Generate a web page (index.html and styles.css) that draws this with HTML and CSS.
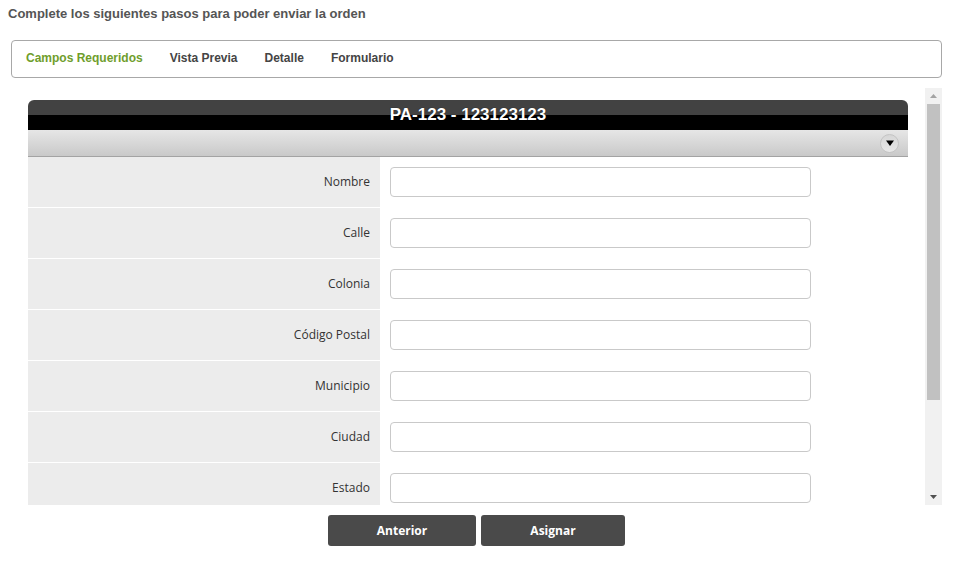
FILE: index.html
```html
<!DOCTYPE html>
<html lang="es">
<head>
<meta charset="utf-8">
<title>Orden</title>
<link rel="stylesheet" href="styles.css">
</head>
<body>
<div class="title">Complete los siguientes pasos para poder enviar la orden</div>
<nav class="tabs">
  <span class="tab active">Campos Requeridos</span>
  <span class="tab">Vista Previa</span>
  <span class="tab">Detalle</span>
  <span class="tab">Formulario</span>
</nav>
<div class="scroll">
  <div class="viewport">
    <div class="panel">
      <div class="panel-head">PA-123 - 123123123</div>
      <div class="panel-sub">
        <span class="toggle"><svg width="10" height="8" viewBox="0 0 10 8"><path d="M1 1.5 H9 L5 7 Z" fill="#000"/></svg></span>
      </div>
      <div class="row"><label class="lbl">Nombre</label><div class="fld"><input class="inp" type="text"></div></div>
      <div class="row"><label class="lbl">Calle</label><div class="fld"><input class="inp" type="text"></div></div>
      <div class="row"><label class="lbl">Colonia</label><div class="fld"><input class="inp" type="text"></div></div>
      <div class="row"><label class="lbl">Código Postal</label><div class="fld"><input class="inp" type="text"></div></div>
      <div class="row"><label class="lbl">Municipio</label><div class="fld"><input class="inp" type="text"></div></div>
      <div class="row"><label class="lbl">Ciudad</label><div class="fld"><input class="inp" type="text"></div></div>
      <div class="row"><label class="lbl">Estado</label><div class="fld"><input class="inp" type="text"></div></div>
      <div class="row"><label class="lbl">País</label><div class="fld"><input class="inp" type="text"></div></div>
      <div class="row"><label class="lbl">Teléfono</label><div class="fld"><input class="inp" type="text"></div></div>
    </div>
  </div>
  <div class="sbar" aria-hidden="true">
    <div class="sbar-btn"><svg width="7" height="4" viewBox="0 0 7 4"><path d="M0 4 L3.5 0 L7 4 Z" fill="#a3a3a3"/></svg></div>
    <div class="sbar-track"><div class="sbar-thumb"></div></div>
    <div class="sbar-btn"><svg width="7" height="4" viewBox="0 0 7 4"><path d="M0 0 L7 0 L3.5 4 Z" fill="#505050"/></svg></div>
  </div>
</div>
<div class="actions">
  <button class="btn btn-prev">Anterior</button>
  <button class="btn btn-next">Asignar</button>
</div>
</body>
</html>
```
FILE: styles.css
```css
html, body {
  margin: 0;
  padding: 0;
  background: #fff;
}
body {
  width: 953px;
  height: 563px;
  overflow: hidden;
  font-family: "Liberation Sans", Arial, sans-serif;
}
.title {
  padding: 6px 8px 0;
  font-size: 13px;
  line-height: 15px;
  font-weight: bold;
  color: #555;
}
.tabs {
  margin: 19px 11px 0 11px;
  height: 34px;
  padding: 0 0 2px 14px;
  border: 1px solid #a8a8a8;
  border-radius: 4px;
  display: flex;
  align-items: center;
}
.tab {
  font-size: 12px;
  font-weight: bold;
  color: #444;
  margin-right: 27px;
}
.tab.active {
  color: #6f9e2c;
}
.scroll {
  margin: 10px 0 0 28px;
  width: 914px;
  height: 417px;
  display: flex;
}
.viewport {
  flex: 1;
  overflow: hidden;
  padding-top: 12px;
}
.sbar {
  width: 17px;
  background: #f1f1f1;
  display: flex;
  flex-direction: column;
}
.sbar-btn {
  height: 16px;
  display: flex;
  align-items: center;
  justify-content: center;
}
.sbar-track {
  flex: 1;
  padding: 0 2px;
}
.sbar-thumb {
  height: 296px;
  background: #c1c1c1;
}
.panel {
  width: 880px;
}
.panel-head {
  height: 30px;
  border-radius: 6px 6px 0 0;
  background: linear-gradient(#424242 0, #424242 15px, #000 15px, #000 30px);
  color: #fff;
  font-weight: bold;
  font-size: 17px;
  line-height: 30px;
  text-align: center;
  text-shadow: 0 0 1px rgba(0,0,0,.8);
}
.panel-sub {
  height: 26px;
  background: linear-gradient(#e6e6e6, #c9c9c9);
  border-bottom: 1px solid #a3a3a3;
  display: flex;
  align-items: center;
  justify-content: flex-end;
  padding-right: 9px;
}
.toggle {
  box-sizing: border-box;
  width: 19px;
  height: 19px;
  border-radius: 50%;
  border: 1px solid #c4c4c4;
  background: linear-gradient(#d6d6d6, #e8e8e8);
  display: flex;
  align-items: center;
  justify-content: center;
}
.row {
  display: flex;
  height: 50px;
  border-bottom: 1px solid #fff;
}
.lbl {
  width: 342px;
  padding: 0 10px 2px 0;
  background: #ececec;
  display: flex;
  align-items: center;
  justify-content: flex-end;
  font-family: "Open Sans", "DejaVu Sans", sans-serif;
  font-size: 12px;
  color: #333;
}
.fld {
  padding: 10px 0 0 10px;
}
.inp {
  box-sizing: border-box;
  width: 421px;
  height: 30px;
  margin: 0;
  border: 1px solid #c9c9c9;
  border-radius: 4px;
  background: #fff;
  outline: none;
}
.actions {
  display: flex;
  justify-content: center;
  gap: 5px;
  margin-top: 10px;
}
.btn {
  height: 31px;
  border: none;
  border-radius: 3px;
  background: #4a4a4a;
  color: #fff;
  font-family: "Open Sans", "DejaVu Sans", sans-serif;
  font-weight: bold;
  font-size: 12px;
  padding: 0;
}
.btn-prev { width: 148px; }
.btn-next { width: 144px; }
```
